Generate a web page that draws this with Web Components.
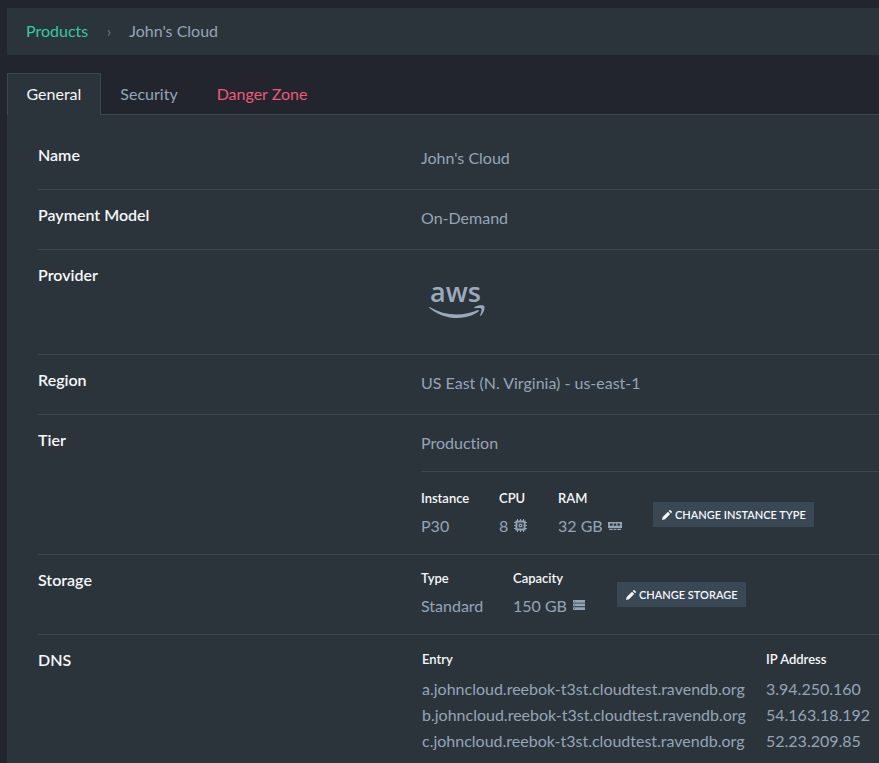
<!DOCTYPE html>
<html lang="en">
<head>
<meta charset="utf-8">
<title>John's Cloud</title>
<style>
html,body{margin:0;height:100%;overflow:hidden}
body{background:#22252d;color:#94a5b8;font:16px/24px Lato,"Liberation Sans",sans-serif;font-variant-ligatures:none;
--panel:#2c343b;--line:#3a4754;--white:#f5f8fa;--muted:#94a5b8;--green:#37c8a3;--red:#f0587c
}
</style>
</head>
<body>
<product-page></product-page>
<script>
function define(name, html) {
  const t = document.createElement('template');
  t.innerHTML = html;
  customElements.define(name, class extends HTMLElement {
    constructor() {
      super();
      this.attachShadow({mode: 'open'}).append(t.content.cloneNode(true));
    }
  });
}

define('bread-crumbs', `<style>
:host{display:flex;align-items:center;height:47px;box-sizing:border-box;padding:0 19px 2px;background:var(--panel);white-space:nowrap}
</style><slot></slot>`);

define('tab-item', `<style>
:host{display:block;box-sizing:border-box;height:42px;padding:8px 18.5px 0 18.5px;border:1px solid transparent;border-bottom:0;white-space:nowrap}
:host([active]){background:var(--panel);border-color:var(--line);color:var(--white);margin-bottom:-1px}
:host([danger]){color:var(--red)}
</style><slot></slot>`);

define('tab-bar', `<style>
:host{display:flex;height:41px;border-bottom:1px solid var(--line)}
</style><slot></slot>`);

define('detail-row', `<style>
:host{display:grid;grid-template-columns:383px 1fr;box-sizing:border-box;border-bottom:1px solid var(--line);height:var(--h,60px)}
.label{color:var(--white);font-weight:600;padding-top:13px}
.value{padding-top:var(--vp,16px);min-width:0}
:host([last]){border-bottom:0}
</style><div class="label"><slot name="label"></slot></div><div class="value"><slot></slot></div>`);

define('stat-item', `<style>
:host{display:block;white-space:nowrap;flex:none}
.head{color:var(--white);font-size:13px;font-weight:600;line-height:20px;margin-bottom:6px}
.val{line-height:24px;display:flex;align-items:center;gap:6px}
</style><div class="head"><slot name="head"></slot></div><div class="val"><slot></slot></div>`);

define('action-button', `<style>
:host{display:flex;align-items:center;box-sizing:border-box;height:25px;padding:0 0 0 9px;gap:3px;background:#3a4755;color:var(--white);font-size:11px;font-weight:600;line-height:25px;white-space:nowrap;flex:none}
svg{display:block;flex:none}
</style><svg width="10" height="10" viewBox="0 0 10 10"><path d="M0 10l.7-3L6 1.700 8.200 4 3 9.300zM6.700 1l.8-.8q.5-.4 1 0l1.300 1.300q.4.500 0 1L9 3.300z" fill="currentColor"/></svg><slot></slot>`);

define('aws-logo', `<style>
:host{display:block;width:58px;height:38px;color:#9aaabd}
.word{display:block;height:20px;font:600 27px/18px "Open Sans","Noto Sans",sans-serif;padding-left:1px}
svg{display:block}
</style><span class="word">aws</span><svg width="58" height="16" viewBox="0 0 58 16" fill="currentColor"><path d="M.5 3.900C9 8.900 18 11.400 27.500 11.400c7.500 0 14.500-1.500 21-4.200 1.100-.4 1.900.6.900 1.400C44 12.900 36 15 28.500 15 18 15 8 11.200.4 4.900 0 4.400.1 3.700.5 3.900z"/><path d="M45.500 4.200C48.500 2.100 54.200 1.900 55.200 3c1 1.200-.5 7.300-3.400 9.700-.5.4-.9.200-.7-.3.600-1.600 2-5.700 1.300-6.700-.7-.8-4.500-.7-6.500-.5-.6.100-.9-.6-.4-1z"/></svg>`);

define('product-page', `<style>
:host{display:flex;flex-direction:column;box-sizing:border-box;height:100vh;padding:8px 0 0 7px}
bread-crumbs{flex:none}
tab-bar{flex:none;margin-top:18px}
.green{color:var(--green)}
.sep{color:#64758a;margin:0 18px 0 18.500px}
main{flex:1;background:var(--panel);padding:15px 0 0 31px;min-height:0;overflow:hidden}
.tier{border-bottom:1px solid var(--line);height:41px;box-sizing:border-box}
.stats{display:flex}
svg{display:block}
table{border-spacing:0;white-space:nowrap}
th{color:var(--white);font-size:13px;font-weight:600;line-height:20px;text-align:left;padding:0 0 7px 1px}
td{line-height:26px;padding:0 0 0 1px}
</style>
<bread-crumbs><span class="green">Products</span><span class="sep">›</span><span>John's Cloud</span></bread-crumbs>
<tab-bar><tab-item active>General</tab-item><tab-item>Security</tab-item><tab-item danger>Danger Zone</tab-item></tab-bar>
<main>
<detail-row><span slot="label">Name</span>John's Cloud</detail-row>
<detail-row><span slot="label">Payment Model</span>On-Demand</detail-row>
<detail-row style="--h:105px;--vp:33px"><span slot="label">Provider</span><aws-logo style="margin-left:8px"></aws-logo></detail-row>
<detail-row><span slot="label">Region</span>US East (N. Virginia) - us-east-1</detail-row>
<detail-row style="--h:140px"><span slot="label">Tier</span>
<div class="tier">Production</div>
<div class="stats" style="padding-top:16px">
<stat-item style="width:78px"><span slot="head">Instance</span>P30</stat-item>
<stat-item style="width:59px"><span slot="head">CPU</span>8<svg width="13" height="13" viewBox="0 0 13 13" style="margin-top:-2px"><path d="M3 0h1v1.500h2V0h1v1.500h2V0h1v1.500h1.500V3H13v1h-1.500v2H13v1h-1.500v2H13v1h-1.500v1.500H10V13H9v-1.500H7V13H6v-1.500H4V13H3v-1.500H1.500V10H0V9h1.500V7H0V6h1.500V4H0V3h1.500V1.500H3zM3.400 3.400v6.200h6.200V3.400zM4.700 4.700h3.600v3.600H4.700zM5.900 5.900v1.200h1.200V5.900z" fill="#94a5b8" fill-rule="evenodd"/></svg></stat-item>
<stat-item style="width:95px"><span slot="head">RAM</span>32 GB<svg width="14" height="8" viewBox="0 0 14 8" style="margin:-1px 0 0 -1px"><path d="M0 0h14v2.500q-1 .5 0 1V6H0V3.500q1-.5 0-1zM2 1.500v2.300h2.500V1.500zM5.700 1.500v2.300h2.600V1.500zM9.500 1.500v2.300H12V1.500z" fill="#94a5b8" fill-rule="evenodd"/><path d="M1 6.700h3.700V8H1zM5.500 6.700h3V8h-3zM9.300 6.700H13V8H9.300z" fill="#94a5b8"/></svg></stat-item>
<action-button style="margin-top:14px;width:161px">CHANGE INSTANCE TYPE</action-button>
</div></detail-row>
<detail-row style="--h:80px;--vp:13px"><span slot="label">Storage</span>
<div class="stats">
<stat-item style="width:92px"><span slot="head">Type</span>Standard</stat-item>
<stat-item style="width:104px"><span slot="head">Capacity</span>150 GB<svg width="12" height="10" viewBox="0 0 12 10" style="margin-top:-2px"><path d="M0 0h12v2.700H0zM0 3.600h12v2.700H0zM0 7.200h12V10H0z" fill="#94a5b8"/><path d="M1 1.300h1.200M1 5h1.200M1 8.600h1.200" stroke="#2c343b" stroke-width=".5"/></svg></stat-item>
<action-button style="margin-top:14px;width:129px">CHANGE STORAGE</action-button>
</div></detail-row>
<detail-row last style="--h:140px;--vp:14px"><span slot="label">DNS</span>
<table><tr><th style="width:343px">Entry</th><th>IP Address</th></tr>
<tr><td>a.johncloud.reebok-t3st.cloudtest.ravendb.org</td><td>3.94.250.160</td></tr>
<tr><td>b.johncloud.reebok-t3st.cloudtest.ravendb.org</td><td>54.163.18.192</td></tr>
<tr><td>c.johncloud.reebok-t3st.cloudtest.ravendb.org</td><td>52.23.209.85</td></tr></table>
</detail-row>
</main>`);
</script>
</body>
</html>
